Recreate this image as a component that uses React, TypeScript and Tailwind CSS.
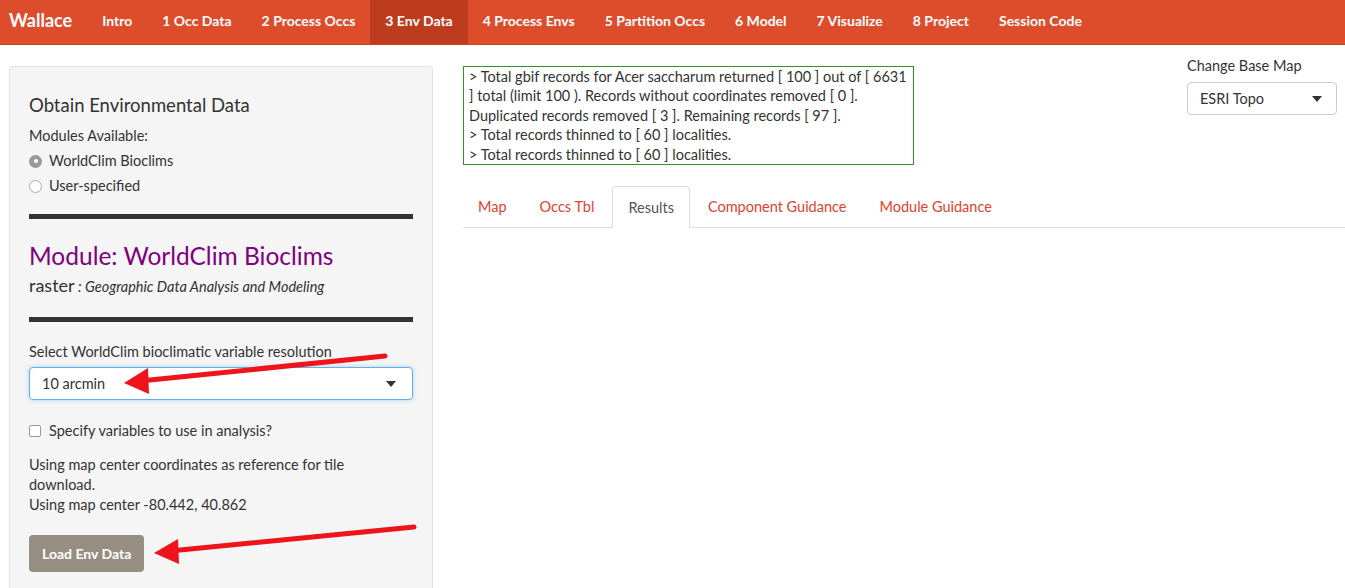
import React from "react";

const navItems = [
  "Intro",
  "1 Occ Data",
  "2 Process Occs",
  "3 Env Data",
  "4 Process Envs",
  "5 Partition Occs",
  "6 Model",
  "7 Visualize",
  "8 Project",
  "Session Code",
];

const tabs = ["Map", "Occs Tbl", "Results", "Component Guidance", "Module Guidance"];

const logLines = [
  "> Total gbif records for Acer saccharum returned [ 100 ] out of [ 6631",
  "] total (limit 100 ). Records without coordinates removed [ 0 ].",
  "Duplicated records removed [ 3 ]. Remaining records [ 97 ].",
  "> Total records thinned to [ 60 ] localities.",
  "> Total records thinned to [ 60 ] localities.",
];

function Caret() {
  return (
    <svg width="10" height="6" viewBox="0 0 10 6" className="shrink-0">
      <path d="M0 0 L10 0 L5 6 Z" fill="#333" />
    </svg>
  );
}

export default function App() {
  return (
    <div
      className="relative w-[1345px] h-[588px] overflow-hidden bg-white text-[#333]"
      style={{ fontFamily: "Lato, 'Noto Sans', sans-serif" }}
    >
      {/* navbar */}
      <div className="flex items-stretch h-[45px] bg-[#dd4d2b] border-b border-[#c84424] text-white">
        <div className="flex items-center pb-[4px] pl-[9px] pr-[15px] text-[18px] font-bold">Wallace</div>
        {navItems.map((n) => (
          <div
            key={n}
            className={
              "flex items-center pb-[4px] px-[15px] text-[14px] font-bold " +
              (n === "3 Env Data" ? "bg-[#bd3c1e]" : "")
            }
          >
            {n}
          </div>
        ))}
      </div>

      <div className="flex pt-[21px]">
        {/* left panel */}
        <div className="ml-[9px] w-[424px] h-[560px] shrink-0 rounded-[4px] border border-[#e3e3e3] bg-[#f5f5f5] px-[19px] pt-[26px]">
          <div className="text-[18.5px] leading-[24px]">Obtain Environmental Data</div>
          <div className="mt-[9px] text-[14.5px] leading-[20px]">Modules Available:</div>
          <div className="mt-[5px] flex flex-col gap-[5px] text-[14.5px] leading-[20px]">
            <label className="flex items-center gap-[7px]">
              <span className="flex h-[13px] w-[13px] items-center justify-center rounded-full bg-[#999]">
                <span className="h-[4px] w-[4px] rounded-full bg-white" />
              </span>
              WorldClim Bioclims
            </label>
            <label className="flex items-center gap-[7px]">
              <span className="h-[13px] w-[13px] rounded-full border border-[#aaa] bg-white" />
              User-specified
            </label>
          </div>
          <div className="mt-[18px] h-[5px] bg-[#333]" />
          <div className="mt-[22px] text-[24.5px] leading-[30px] text-[#800080]">Module: WorldClim Bioclims</div>
          <div className="mt-[4px] leading-[20px]">
            <span className="text-[18px]">raster</span>
            <span className="text-[14.5px] italic"> : Geographic Data Analysis and Modeling</span>
          </div>
          <div className="mt-[20px] h-[5px] bg-[#333]" />
          <div className="mt-[20px] text-[14.5px] leading-[20px]">Select WorldClim bioclimatic variable resolution</div>
          <div className="mt-[5px] flex h-[33px] items-center justify-between rounded-[4px] border border-[#66afe9] bg-white pl-[12px] pr-[16px] text-[14.5px] shadow-[0_0_4px_rgba(102,175,233,0.5)]">
            <span>10 arcmin</span>
            <Caret />
          </div>
          <label className="mt-[21px] flex items-center gap-[8px] text-[14.5px] leading-[20px]">
            <span className="h-[12px] w-[12px] rounded-[2px] border border-[#999] bg-white" />
            Specify variables to use in analysis?
          </label>
          <div className="mt-[14px] text-[14.5px] leading-[20px]">
            Using map center coordinates as reference for tile
            <br />
            download.
            <br />
            Using map center -80.442, 40.862
          </div>
          <div className="mt-[20px] inline-flex h-[37px] items-center rounded-[4px] bg-[#978e83] px-[13px] text-[14px] font-bold text-white">
            Load Env Data
          </div>
        </div>

        {/* right area */}
        <div className="ml-[30px] flex-1 flex flex-col">
          <div className="flex">
            <div className="w-[451px] border border-[#339126] px-[5px] text-[14.5px] leading-[19.4px]">
              {logLines.map((l, i) => (
                <div key={i} className="whitespace-nowrap">
                  {l}
                </div>
              ))}
            </div>
            <div className="ml-auto mr-[8px] w-[150px] -mt-[10px]">
              <div className="text-[14.5px] leading-[20px]">Change Base Map</div>
              <div className="mt-[6px] flex h-[33px] items-center justify-between rounded-[4px] border border-[#ccc] bg-white pl-[12px] pr-[14px] text-[14.5px]">
                <span>ESRI Topo</span>
                <Caret />
              </div>
            </div>
          </div>
          <div className="mt-[21px] flex h-[42px] items-stretch border-b border-[#ddd]">
            {tabs.map((t) => (
              <div
                key={t}
                className={
                  "mr-[3px] flex items-center px-[15px] text-[14.5px] " +
                  (t === "Results"
                    ? "rounded-t-[4px] border border-b-0 border-[#ddd] bg-white text-[#555] -mb-[1px]"
                    : "text-[#e2412f]")
                }
              >
                {t}
              </div>
            ))}
          </div>
        </div>
      </div>

      {/* annotation arrows */}
      <svg className="pointer-events-none absolute left-0 top-0" width="1345" height="588">
        <line x1="385" y1="356" x2="140" y2="381" stroke="#ee141c" strokeWidth="5" strokeLinecap="round" />
        <polygon points="124,383 148,368 149,394" fill="#ee141c" />
        <line x1="414" y1="527" x2="170" y2="551" stroke="#ee141c" strokeWidth="5" strokeLinecap="round" />
        <polygon points="154,553 178,539 179,564" fill="#ee141c" />
      </svg>
    </div>
  );
}
